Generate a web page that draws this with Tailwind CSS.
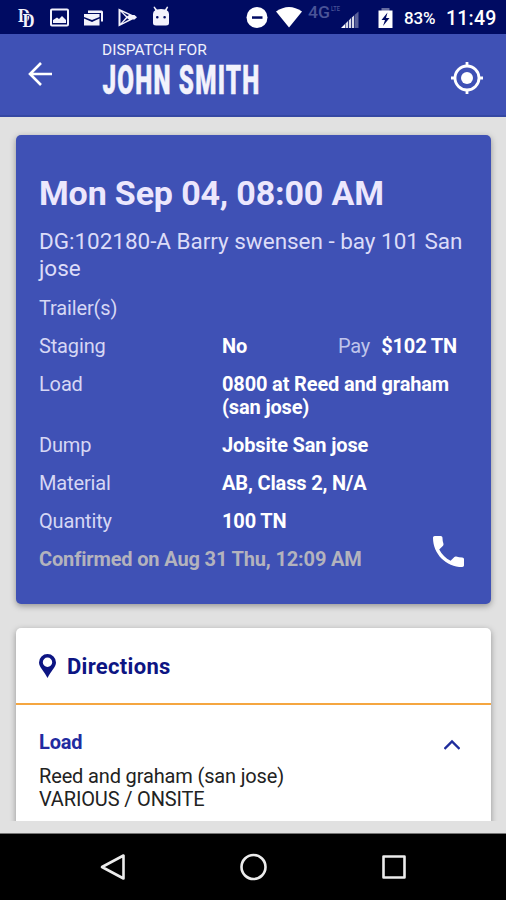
<!DOCTYPE html>
<html lang="en">
<head>
  <meta charset="UTF-8">
  <meta name="viewport" content="width=device-width, initial-scale=1">
  <title>Dispatch</title>
  <script src="https://cdn.jsdelivr.net/npm/@tailwindcss/browser@4"></script>
</head>
<body class="bg-[#e1e1e1]">
  <div class="w-[506px] h-[900px] flex flex-col overflow-hidden font-[Roboto,sans-serif] text-[20px] leading-[23px] tracking-[-0.15px]">

    <!-- Status bar -->
    <div class="h-[34px] shrink-0 bg-[#000b62] flex items-center text-white">
      <svg class="w-[190px] h-[34px] shrink-0" viewBox="0 0 190 34" fill="#f3f3fc">
        <g font-family="Liberation Serif, serif" font-weight="700" font-size="18" letter-spacing="0">
          <text x="18" y="21.500" textLength="12" lengthAdjust="spacingAndGlyphs">D</text>
          <text x="22.500" y="26.500" textLength="12" lengthAdjust="spacingAndGlyphs" stroke="#000b62" stroke-width="1.500" paint-order="stroke">D</text>
        </g>
        <path fill-rule="evenodd" d="M52 8.500H67Q69 8.500 69 10.500V24.500Q69 26.500 67 26.500H52Q50 26.500 50 24.500V10.500Q50 8.500 52 8.500ZM52 10.500V24.500H67V10.500Z"/>
        <path d="M53 23V20L57 17.500L59 19L62 16L66 20V23Z"/>
        <path d="M88 10.500H101.500Q103 10.500 103 12V21.500H101V13H88Z"/>
        <path d="M84 14H99.500V17L92 20L84 17ZM84 18.500L92 22L99.500 18.500V25.500H84Z"/>
        <path fill-rule="evenodd" d="M118.500 8.500L132.500 15H134.500L137 17.300L134.500 19.500H132.500L118.500 26.500ZM120.500 11.500V23.500L126 17.300ZM122.500 12L127.200 16.200L129 15ZM122.500 23L129 19.500L127.200 18.300Z"/>
        <path fill-rule="evenodd" d="M154.500 6.500L157 9.500Q161 8.300 165 9.500L167 6.500L168.200 7L166.800 10.300Q169 11.500 169 14V23Q169 25.500 166 25.500H156Q153 25.500 153 23V14Q153 11.500 155.200 10.300L153.400 7ZM156 17.300A1.300 1.300 0 1 0 158.600 17.300A1.300 1.300 0 1 0 156 17.300M163.300 17.300A1.300 1.300 0 1 0 165.900 17.300A1.300 1.300 0 1 0 163.300 17.300"/>
      </svg>
      <svg class="w-[152px] h-[34px] shrink-0 ml-[52px]" viewBox="242 0 152 34" fill="#fff">
        <circle cx="257" cy="17.500" r="10.500"/>
        <path d="M252 16.300H262.500V18.800H252Z" fill="#000b62"/>
        <path d="M276 11.500Q289 2.500 302 11.500L289 27.500Z"/>
        <g fill="#4a5498" font-family="Roboto, sans-serif" font-weight="500" letter-spacing="0">
          <text x="308" y="17.500" font-size="17" textLength="22" lengthAdjust="spacingAndGlyphs">4G</text>
          <text x="331" y="11" font-size="7" textLength="9" lengthAdjust="spacingAndGlyphs">LTE</text>
        </g>
        <path d="M341 28L345 24V28Z"/>
        <path d="M345.500 23.500L348 21V28H345.500ZM348.800 20.500L351 18V28H348.800ZM351.800 17.500L354 15.500V28H351.800Z" opacity=".85"/>
        <path d="M354.500 15L358.500 11.500V28H354.500Z" opacity=".35"/>
        <path d="M381.500 8H389.500V11H381.500Z" opacity=".4"/>
        <path d="M378.500 10.500H392.500V28H378.500Z"/>
        <path d="M387.500 12.500L381.500 20H385L383 26L389.500 18H386Z" fill="#000b62"/>
      </svg>
      <span class="w-[33px] shrink-0 ml-[10px] text-[17px] font-medium whitespace-nowrap tracking-[-0.1px] pt-[2px]">83%</span>
      <span class="ml-[9px] text-[19.500px] font-medium whitespace-nowrap tracking-[0.2px] pt-[2px]">11:49</span>
    </div>

    <!-- App bar -->
    <header class="h-[83px] shrink-0 bg-[#3f51b5] border-b-2 border-[#3548a3] flex">
      <svg class="w-[24px] h-[24px] ml-[28px] mt-[28px]" viewBox="0 0 24 24" fill="none" stroke="#fff" stroke-width="2.600">
        <path d="M24 12H3M13 1L2 12L13 23"/>
      </svg>
      <div class="ml-[50px] pt-[7px] text-[#f2f2fc]">
        <div class="text-[15.500px] leading-[18px] whitespace-nowrap tracking-[0.05px]">DISPATCH FOR</div>
        <svg class="w-[160px] h-[36px] overflow-visible" viewBox="0 0 160 36">
          <text x="0.500" y="35" font-size="40" font-weight="900" font-family="Roboto, sans-serif" letter-spacing="2" textLength="158" lengthAdjust="spacingAndGlyphs" fill="#f2f2fc" stroke="#f2f2fc" stroke-width="0.500">JOHN SMITH</text>
        </svg>
      </div>
      <svg class="w-[32px] h-[32px] ml-auto mr-[23px] mt-[28px]" viewBox="0 0 32 32" fill="none" stroke="#fff" stroke-width="2.800">
        <circle cx="16" cy="16" r="12"/>
        <circle cx="16" cy="16" r="6" fill="#fff" stroke="none"/>
        <path d="M16 0V5M16 27V32M0 16H5M27 16H32"/>
      </svg>
    </header>

    <main class="h-[704px] shrink-0 overflow-hidden pt-[18px] pl-[16px] pr-[15px]">
      <!-- Dispatch summary -->
      <section class="relative h-[469px] rounded-[5px] bg-[#3f51b5] shadow-[0_2px_6px_rgba(0,0,0,0.35)] pt-[38px] px-[23px] text-[#d6d7f4]">
        <h1 class="text-[34px] leading-[40px] font-bold text-[#ece7fd] whitespace-nowrap">Mon Sep 04, 08:00 AM</h1>
        <p class="mt-[15px] text-[22.500px] leading-[27px] tracking-[-0.03px] text-[#dcdcf8] whitespace-nowrap">DG:102180-A Barry swensen - bay 101 San<br>jose</p>
        <div class="mt-[15px] grid grid-cols-[182px_1fr] gap-x-[1px] gap-y-[15px]">
          <div class="col-span-2">Trailer(s)</div>
          <div>Staging</div>
          <div class="flex justify-between pr-[11px]">
            <span class="font-bold text-white">No</span>
            <span class="whitespace-nowrap"><span class="text-[#bfc4eb]">Pay</span><span class="ml-[11px] font-bold text-white">$102 TN</span></span>
          </div>
          <div>Load</div>
          <div class="font-bold text-white whitespace-nowrap">0800 at Reed and graham<br>(san jose)</div>
          <div>Dump</div>
          <div class="font-bold text-white">Jobsite San jose</div>
          <div>Material</div>
          <div class="font-bold text-white">AB, Class 2, N/A</div>
          <div>Quantity</div>
          <div class="font-bold text-white">100 TN</div>
          <div class="col-span-2 font-bold text-[#b3b3bd]">Confirmed on Aug 31 Thu, 12:09 AM</div>
        </div>
        <svg class="absolute right-[27px] bottom-[37px] w-[31px] h-[31px]" viewBox="3 3 18 18" preserveAspectRatio="none" fill="#fff">
          <path d="M6.620 10.790c1.440 2.830 3.760 5.140 6.590 6.590l2.200-2.200c.27-.27.67-.36 1.020-.24 1.120.37 2.330.57 3.570.57.550 0 1 .45 1 1V20c0 .550-.45 1-1 1-9.390 0-17-7.610-17-17 0-.55.450-1 1-1h3.500c.55 0 1 .45 1 1 0 1.250.2 2.450.57 3.570.11.35.03.74-.25 1.020l-2.200 2.200z"/>
        </svg>
      </section>

      <!-- Directions -->
      <section class="mt-[24px] h-[230px] rounded-[5px] bg-white shadow-[0_2px_6px_rgba(0,0,0,0.35)]">
        <div class="h-[77px] border-b-2 border-[#f5a640] flex items-center pl-[23px] text-[#0d1583]">
          <svg class="w-[17px] h-[24px]" viewBox="0 0 17 24">
            <path fill="#0d1583" fill-rule="evenodd" d="M8.500 0A8.500 8.500 0 0 1 17 8.500C17 13 11.500 17.500 8.500 24C5.500 17.500 0 13 0 8.500A8.500 8.500 0 0 1 8.500 0ZM8.500 3.500A4.700 4.700 0 1 0 8.500 12.900A4.700 4.700 0 1 0 8.500 3.500Z"/>
          </svg>
          <h2 class="ml-[11px] mt-[2px] text-[22px] leading-[26px] font-bold tracking-[0.3px]">Directions</h2>
        </div>
        <div class="pt-[26px] pl-[23px] pr-[31px]">
          <div class="flex justify-between items-center">
            <h3 class="font-bold text-[#222ba0]">Load</h3>
            <svg class="w-[16px] h-[11px] mt-[3px]" viewBox="0 0 16 11" fill="none" stroke="#1e2c9c" stroke-width="2.300">
              <path d="M0.500 10L8 2.500L15.500 10"/>
            </svg>
          </div>
          <p class="mt-[11px] text-[#222] whitespace-nowrap">Reed and graham (san jose)<br>VARIOUS / ONSITE</p>
        </div>
      </section>
    </main>

    <div class="h-[12px] shrink-0 bg-[#e1e1e1]"></div>

    <!-- Navigation bar -->
    <nav class="h-[67px] shrink-0 bg-black border-t border-[#777] flex justify-center items-center gap-[113px]">
      <svg class="w-[28px] h-[28px]" viewBox="0 0 28 28" fill="none" stroke="#ececec" stroke-width="2.600" stroke-linejoin="round">
        <path d="M25.500 2.500V25.500L4 14Z"/>
      </svg>
      <svg class="w-[28px] h-[28px]" viewBox="0 0 28 28" fill="none" stroke="#ececec" stroke-width="2.600">
        <circle cx="14.500" cy="14" r="12"/>
      </svg>
      <svg class="w-[28px] h-[28px]" viewBox="0 0 28 28" fill="none" stroke="#ececec" stroke-width="2.600" stroke-linejoin="round">
        <path d="M3.500 3.500H24.500V24.500H3.500Z"/>
      </svg>
    </nav>
  </div>
</body>
</html>
